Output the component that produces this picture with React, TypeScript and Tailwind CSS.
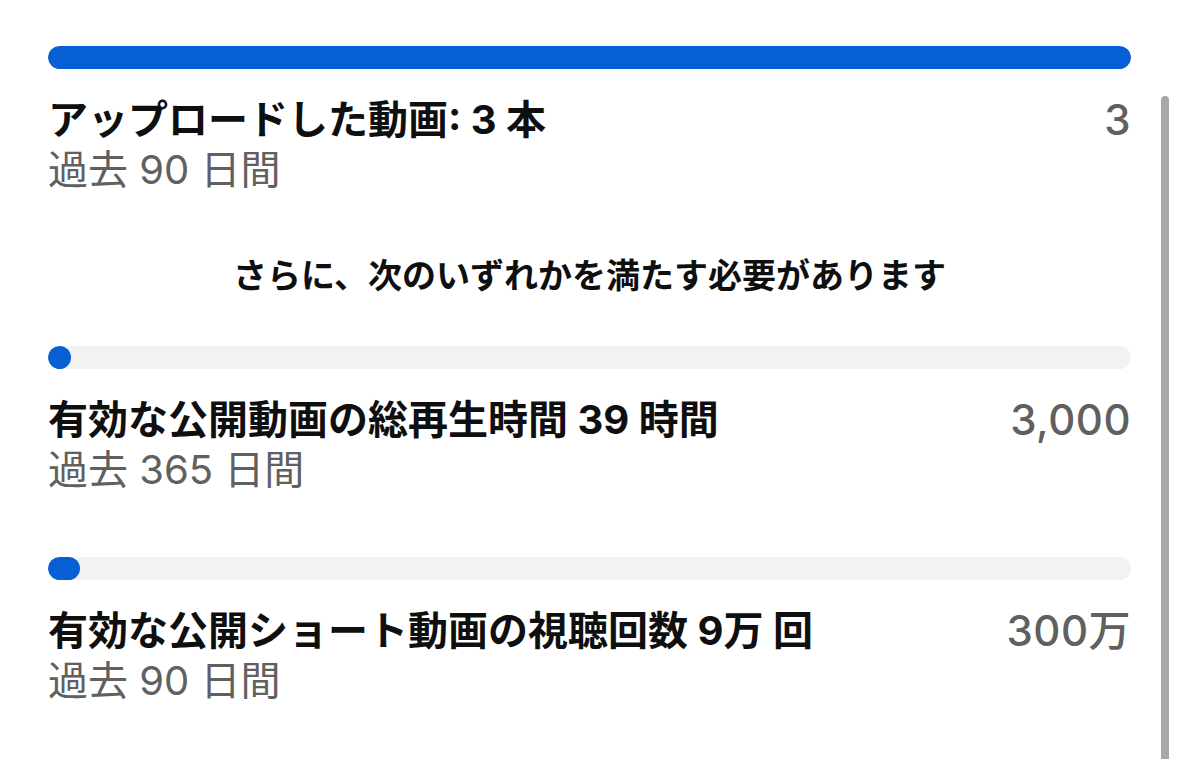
import React from 'react'

const FONT = "Inter, 'Noto Sans CJK JP', sans-serif"

interface RequirementProps {
  progress: number
  title: string
  period: string
  goal: string
  gapTop: string
}

function ProgressBar({ progress }: { progress: number }) {
  return (
    <div className="h-[23px] w-full rounded-full bg-[#f2f2f2] overflow-hidden">
      <div
        className="h-full rounded-full bg-[#065fd4]"
        style={{ width: `${progress}%`, minWidth: 23 }}
      />
    </div>
  )
}

function Requirement({ progress, title, period, goal, gapTop }: RequirementProps) {
  return (
    <div className={gapTop}>
      <ProgressBar progress={progress} />
      <div className="mt-[26px] flex items-start justify-between">
        <div>
          <div className="text-[40px] leading-[50px] font-bold text-[#0f0f0f]">{title}</div>
          <div className="text-[40px] leading-[50px] text-[#606060]">{period}</div>
        </div>
        <div className="text-[42px] leading-[50px] font-medium tracking-[0.5px] text-[#606060]">{goal}</div>
      </div>
    </div>
  )
}

export default function App() {
  return (
    <div
      className="relative h-[759px] w-full overflow-hidden bg-white"
      style={{ fontFamily: FONT }}
    >
      <div className="px-[48px] pt-[46px]">
        <Requirement
          progress={100}
          title="アップロードした動画: 3 本"
          period="過去 90 日間"
          goal="3"
          gapTop=""
        />

        <div className="mt-[61px] text-center text-[34px] leading-[40px] font-bold text-[#0f0f0f]">
          さらに、次のいずれかを満たす必要があります
        </div>

        <Requirement
          progress={1.3}
          title="有効な公開動画の総再生時間 39 時間"
          period="過去 365 日間"
          goal="3,000"
          gapTop="mt-[50px]"
        />

        <Requirement
          progress={3}
          title="有効な公開ショート動画の視聴回数 9万 回"
          period="過去 90 日間"
          goal="300万"
          gapTop="mt-[62px]"
        />
      </div>

      {/* scrollbar */}
      <div className="absolute right-[10px] top-[96px] bottom-0 w-[8px] rounded-t-full bg-[#a8a8a8]" />
    </div>
  )
}
